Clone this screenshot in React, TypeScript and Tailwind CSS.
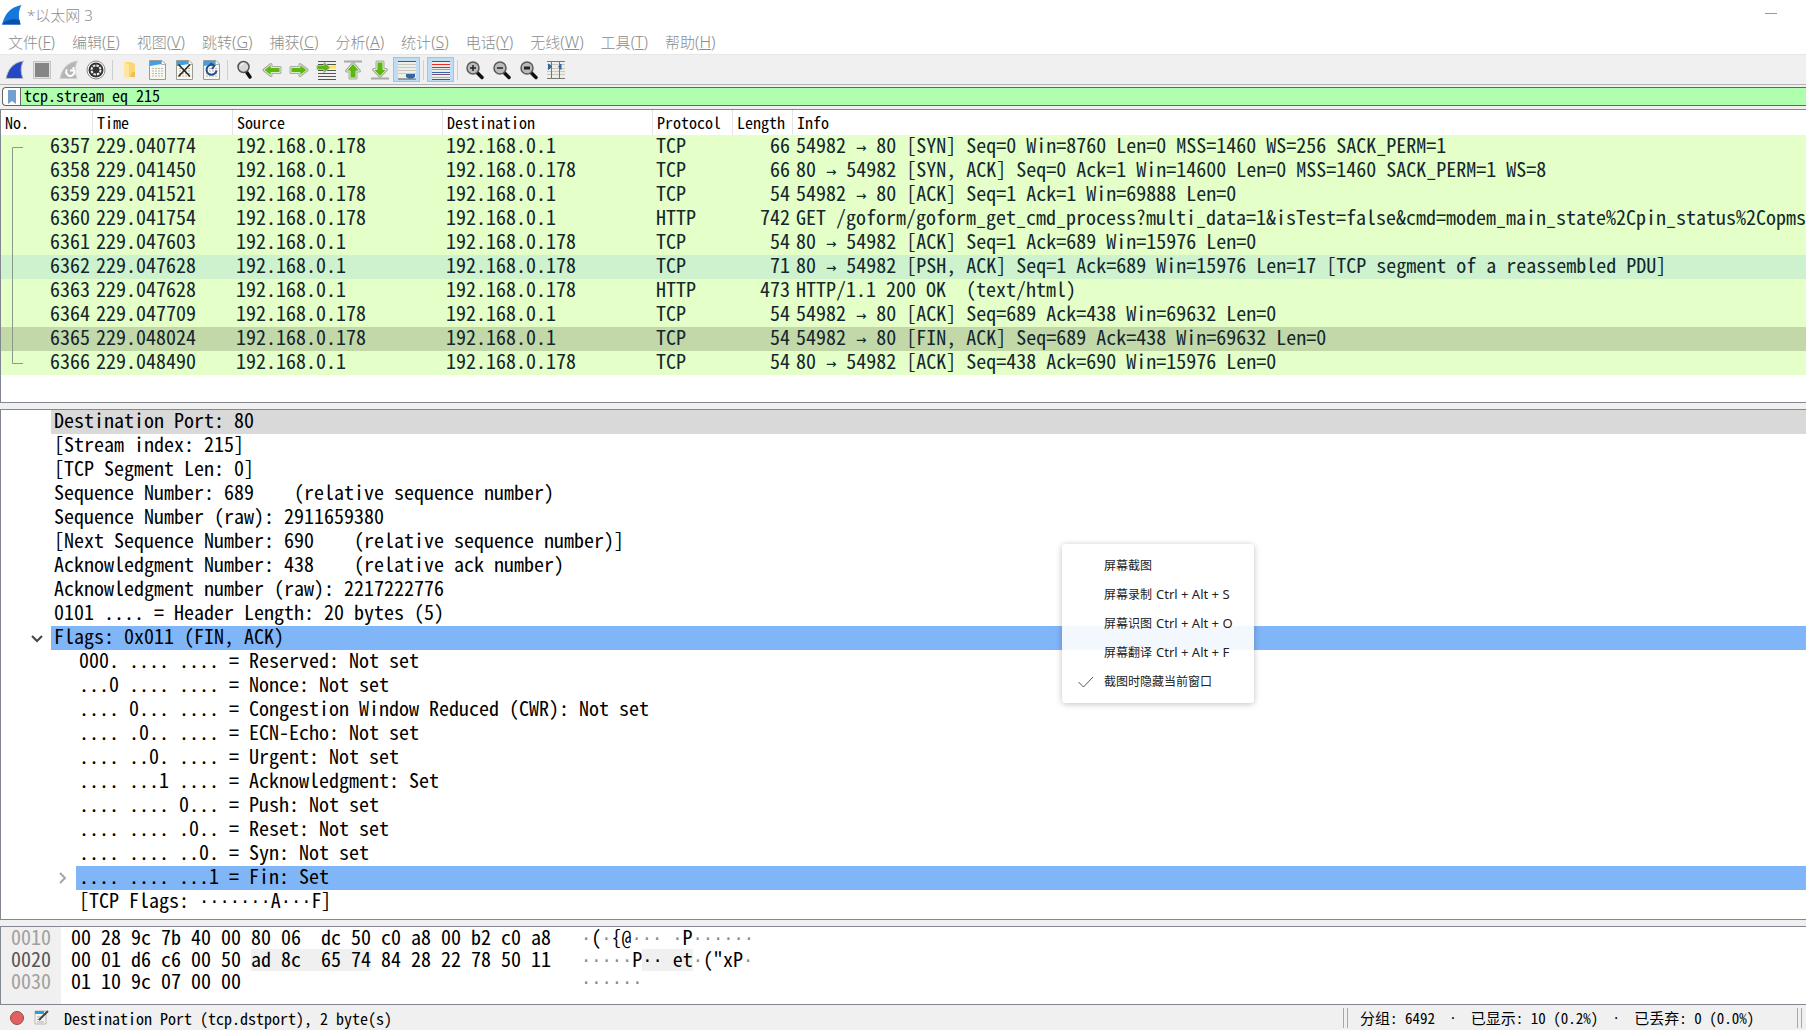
import { ReactNode } from "react";

const MENUS = [
  ["文件", "F"],
  ["编辑", "E"],
  ["视图", "V"],
  ["跳转", "G"],
  ["捕获", "C"],
  ["分析", "A"],
  ["统计", "S"],
  ["电话", "Y"],
  ["无线", "W"],
  ["工具", "T"],
  ["帮助", "H"],
];

const COLUMNS = ["No.", "Time", "Source", "Destination", "Protocol", "Length", "Info"];

const CLIENT = "192.168.0.178";
const SERVER = "192.168.0.1";

const PACKETS = [
  ["6357", "229.040774", CLIENT, SERVER, "TCP", "66", "54982 → 80 [SYN] Seq=0 Win=8760 Len=0 MSS=1460 WS=256 SACK_PERM=1"],
  ["6358", "229.041450", SERVER, CLIENT, "TCP", "66", "80 → 54982 [SYN, ACK] Seq=0 Ack=1 Win=14600 Len=0 MSS=1460 SACK_PERM=1 WS=8"],
  ["6359", "229.041521", CLIENT, SERVER, "TCP", "54", "54982 → 80 [ACK] Seq=1 Ack=1 Win=69888 Len=0"],
  ["6360", "229.041754", CLIENT, SERVER, "HTTP", "742", "GET /goform/goform_get_cmd_process?multi_data=1&isTest=false&cmd=modem_main_state%2Cpin_status%2Copms"],
  ["6361", "229.047603", SERVER, CLIENT, "TCP", "54", "80 → 54982 [ACK] Seq=1 Ack=689 Win=15976 Len=0"],
  ["6362", "229.047628", SERVER, CLIENT, "TCP", "71", "80 → 54982 [PSH, ACK] Seq=1 Ack=689 Win=15976 Len=17 [TCP segment of a reassembled PDU]"],
  ["6363", "229.047628", SERVER, CLIENT, "HTTP", "473", "HTTP/1.1 200 OK  (text/html)"],
  ["6364", "229.047709", CLIENT, SERVER, "TCP", "54", "54982 → 80 [ACK] Seq=689 Ack=438 Win=69632 Len=0"],
  ["6365", "229.048024", CLIENT, SERVER, "TCP", "54", "54982 → 80 [FIN, ACK] Seq=689 Ack=438 Win=69632 Len=0"],
  ["6366", "229.048490", SERVER, CLIENT, "TCP", "54", "80 → 54982 [ACK] Seq=438 Ack=690 Win=15976 Len=0"],
];

const ROW_COLORS: Record<string, string> = {
  "6362": "bg-[#cdf2cd]",
  "6365": "bg-[#c2d8a9]",
};

interface Detail {
  text: string;
  nested?: boolean;
  arrow?: "open" | "closed";
  color?: string;
}

const DETAILS: Detail[] = [
  { text: "Destination Port: 80", color: "bg-[#d9d9d9]" },
  { text: "[Stream index: 215]" },
  { text: "[TCP Segment Len: 0]" },
  { text: "Sequence Number: 689    (relative sequence number)" },
  { text: "Sequence Number (raw): 2911659380" },
  { text: "[Next Sequence Number: 690    (relative sequence number)]" },
  { text: "Acknowledgment Number: 438    (relative ack number)" },
  { text: "Acknowledgment number (raw): 2217222776" },
  { text: "0101 .... = Header Length: 20 bytes (5)" },
  { text: "Flags: 0x011 (FIN, ACK)", arrow: "open", color: "bg-[#80b5f7]" },
  { text: "000. .... .... = Reserved: Not set", nested: true },
  { text: "...0 .... .... = Nonce: Not set", nested: true },
  { text: ".... 0... .... = Congestion Window Reduced (CWR): Not set", nested: true },
  { text: ".... .0.. .... = ECN-Echo: Not set", nested: true },
  { text: ".... ..0. .... = Urgent: Not set", nested: true },
  { text: ".... ...1 .... = Acknowledgment: Set", nested: true },
  { text: ".... .... 0... = Push: Not set", nested: true },
  { text: ".... .... .0.. = Reset: Not set", nested: true },
  { text: ".... .... ..0. = Syn: Not set", nested: true },
  { text: ".... .... ...1 = Fin: Set", nested: true, arrow: "closed", color: "bg-[#80b5f7]" },
  { text: "[TCP Flags: ·······A···F]", nested: true },
];

const POPUP = [
  ["屏幕截图", ""],
  ["屏幕录制", "Ctrl + Alt + S"],
  ["屏幕识图", "Ctrl + Alt + O"],
  ["屏幕翻译", "Ctrl + Alt + F"],
  ["截图时隐藏当前窗口", ""],
];

const MONO = "font-['Noto_Sans_Mono_CJK_SC','Liberation_Mono',monospace]";
const UI = "font-['Noto_Sans','Noto_Sans_CJK_SC',sans-serif]";

// The CJK font draws dots and arrows two cells wide, so they take a Latin font
function Cells({ text }: { text: string }) {
  return (
    <>
      {text.split(/([·→]+)/).map((part, index) =>
        index % 2 ? (
          <span key={index} className="font-['DejaVu_Sans_Mono',monospace] text-[17px]">
            {part}
          </span>
        ) : (
          part
        ),
      )}
    </>
  );
}

function Fin({ body, edge }: { body: string; edge: string }) {
  return (
    <path d="M1 18.500C3 9 8 2.500 18.500 1C15.500 6.500 15.500 12 18 18.500Z" fill={body} stroke={edge} />
  );
}

function Sheet({ children }: { children?: ReactNode }) {
  return (
    <>
      <path d="M2.500 .500H15L18.500 4V19.500H2.500Z" fill="#f8f8ee" stroke="#9a9c92" />
      <path d="M3 1H14.500V4L3 6Z" fill="#3f9fe8" />
      <path d="M14.500 1V4.500H18" fill="#fff" stroke="#a8b4bc" />
      <path d="M5 8.500H16M5 11H16M5 13.500H16M5 16H16" stroke="#b9b9b1" strokeDasharray="2 1" />
      {children}
    </>
  );
}

function Arrow({ d }: { d: string }) {
  return (
    <>
      <path d={d} fill="none" stroke="#a9aca6" strokeWidth="3" strokeLinejoin="round" />
      <path d={d} fill="#5cb711" stroke="#dcecca" />
    </>
  );
}

function Lens({ children }: { children?: ReactNode }) {
  return (
    <>
      <path d="M12 12.500L17 17.500" stroke="#111" strokeWidth="3.500" strokeLinecap="round" />
      <circle cx="8" cy="8" r="6" fill="#bcbcbc" stroke="#5a5a5a" strokeWidth="1.500" />
      {children}
    </>
  );
}

const TOOLS: { name: string; icon: ReactNode; on?: boolean; split?: boolean }[] = [
  { name: "开始", icon: <Fin body="#2548c4" edge="#b9bcc4" /> },
  {
    name: "停止",
    icon: (
      <>
        <path d="M1.500 1.500H18.500V18.500H1.500Z" fill="#e2e2e2" stroke="#c4c4c4" />
        <path d="M3 3H17V17H3Z" fill="#858585" />
      </>
    ),
  },
  {
    name: "重新开始",
    icon: (
      <>
        <Fin body="#b5b5b5" edge="#cfcfcf" />
        <path d="M14.500 9.500A4 4 0 1 1 8 9.500M14.500 7V10.500H11" fill="none" stroke="#fff" strokeWidth="2" />
      </>
    ),
  },
  {
    name: "捕获选项",
    split: true,
    icon: (
      <>
        <circle cx="10" cy="10" r="9" fill="#fff" stroke="#888" />
        <circle cx="10" cy="10" r="7.500" fill="#333" />
        <circle cx="10" cy="10" r="4.500" fill="none" stroke="#eee" strokeWidth="2" strokeDasharray="2.500 1" />
        <circle cx="10" cy="10" r="2.500" fill="#333" />
      </>
    ),
  },
  {
    name: "打开",
    icon: (
      <>
        <path d="M4 2H11L15 4V17H4Z" fill="#f8d775" />
        <path d="M4 2L9 5V19L4 17Z" fill="#ffe7a0" />
        <path d="M12 12H15V17H10Z" fill="#f0c050" />
      </>
    ),
  },
  { name: "保存", icon: <Sheet /> },
  {
    name: "关闭",
    icon: (
      <Sheet>
        <path d="M4.500 4.500L16 16.500M16 4.500L4.500 16.500" stroke="#222" strokeWidth="1.500" />
      </Sheet>
    ),
  },
  {
    name: "重新加载",
    split: true,
    icon: (
      <Sheet>
        <path d="M13 5.500A5 5 0 1 0 15.500 10.500M9 3.500L13.500 5.500L11 9" fill="none" stroke="#234f91" strokeWidth="2" />
      </Sheet>
    ),
  },
  {
    name: "查找",
    icon: (
      <>
        <path d="M11.500 12L15 17" stroke="#111" strokeWidth="3.500" strokeLinecap="round" />
        <circle cx="8.500" cy="7" r="5.500" fill="#d7d7d7" stroke="#555" strokeWidth="1.500" />
        <path d="M5.500 6.500A3.500 3.500 0 0 1 9 3.500" stroke="#fff" fill="none" />
      </>
    ),
  },
  { name: "后退", icon: <Arrow d="M18 7.500H9V4.500L2 10L9 15.500V12.500H18Z" /> },
  { name: "前进", icon: <Arrow d="M2 7.500H11V4.500L18 10L11 15.500V12.500H2Z" /> },
  {
    name: "转到分组",
    icon: (
      <>
        <path d="M2 1.500H20M2 4.500H20M2 10.500H20M2 13.500H20M2 16.500H20M2 19.500H20" stroke="#555" />
        <path d="M14 7H20" stroke="#ffe640" strokeWidth="3" />
        <path d="M1 5.500H8V2L14 7.500L8 13V9.500H1Z" fill="#5cb711" stroke="#b8bdb3" />
      </>
    ),
  },
  {
    name: "首个分组",
    icon: (
      <>
        <path d="M1 1.500H19" stroke="#aaa" strokeWidth="2" />
        <Arrow d="M10 3.500L16.500 11H13V18H7V11H3.500Z" />
      </>
    ),
  },
  {
    name: "最新分组",
    icon: (
      <>
        <path d="M1 18.500H19" stroke="#aaa" strokeWidth="2" />
        <Arrow d="M10 16.500L16.500 9.500H13V2H7V9.500H3.500Z" />
      </>
    ),
  },
  {
    name: "自动滚动",
    on: true,
    split: true,
    icon: (
      <>
        <path d="M1 1H19V19H1Z" fill="#eeeee8" />
        <path d="M1 4.500H19M1 7.500H19M1 10.500H19M1 13.500H19" stroke="#c8c8c0" />
        <path d="M1 1.500H19M1 19H19" stroke="#555" />
        <path d="M9 14H18V17L15.500 18.500H11.500L9 17Z" fill="#3465a4" />
      </>
    ),
  },
  {
    name: "着色",
    on: true,
    split: true,
    icon: (
      <>
        <path d="M1 1H19V19H1Z" fill="#eeeee8" />
        <path d="M1 1.500H19M1 19.500H19" stroke="#555" />
        <path d="M1 4.500H19" stroke="#ef2929" />
        <path d="M1 7.500H19" stroke="#3465a4" />
        <path d="M1 9.500H19" stroke="#73d216" />
        <path d="M1 12.500H19" stroke="#3465a4" />
        <path d="M1 14.500H19" stroke="#75507b" />
        <path d="M1 17.500H19" stroke="#edb200" />
      </>
    ),
  },
  {
    name: "放大",
    icon: (
      <Lens>
        <path d="M5 8H11M8 5V11" stroke="#222" strokeWidth="1.500" />
      </Lens>
    ),
  },
  {
    name: "缩小",
    icon: (
      <Lens>
        <path d="M5 8H11" stroke="#222" strokeWidth="1.500" />
      </Lens>
    ),
  },
  {
    name: "正常大小",
    icon: (
      <Lens>
        <path d="M5 8H11" stroke="#222" strokeWidth="3" />
      </Lens>
    ),
  },
  {
    name: "调整列宽",
    icon: (
      <>
        <path d="M1 3H19V18H1Z" fill="#eeeee8" />
        <path d="M1 4.500H19M1 8.500H19M1 11.500H19M1 14.500H19" stroke="#c8c8c0" />
        <path d="M1 1.500H19M1 18.500H19M5.500 1V19M13.500 1V19" stroke="#777" />
        <path d="M2.500 4L5.500 6.500L2.500 9.500ZM15 4L12.500 6.500L15 9.500Z" fill="#3465a4" stroke="#3465a4" />
      </>
    ),
  },
];

function TreeMark({ index }: { index: number }) {
  const last = PACKETS.length - 1;
  const d = index === 0 ? "M23 12.500H12.500V24" : index === last ? "M12.500 0V12.500H23" : "M12.500 0V24";
  return (
    <svg className="h-6 w-6 shrink-0" viewBox="1 0 24 24" fill="none" stroke="#8b9a86">
      <path d={d} />
    </svg>
  );
}

function PacketTable() {
  return (
    <section className="h-[294px] shrink-0 overflow-hidden border border-r-0 border-[#828790] bg-white">
      <table className="w-full table-fixed border-separate border-spacing-0">
        <colgroup>
          <col className="w-[92px]" />
          <col className="w-[140px]" />
          <col className="w-[210px]" />
          <col className="w-[210px]" />
          <col className="w-20" />
          <col className="w-[60px]" />
          <col />
        </colgroup>
        <thead>
          <tr className="text-left text-[16px] leading-6">
            {COLUMNS.map((name) => (
              <th key={name} className="h-[25px] border-r border-[#e5e5e5] p-0 pl-1 align-top font-normal last:border-r-0">
                {name}
              </th>
            ))}
          </tr>
        </thead>
        <tbody className="text-[20px] leading-5 whitespace-pre text-[#12272e]">
          {PACKETS.map(([no, time, source, destination, protocol, length, info], index) => (
            <tr key={no} className={ROW_COLORS[no] ?? "bg-[#e4ffc7]"}>
              <td className="h-6 p-0 align-top">
                <div className="flex h-6 justify-between pr-[3px]">
                  <TreeMark index={index} />
                  {no}
                </div>
              </td>
              <td className="p-0 pl-[3px] align-top">{time}</td>
              <td className="p-0 pl-[3px] align-top">{source}</td>
              <td className="p-0 pl-[3px] align-top">{destination}</td>
              <td className="p-0 pl-[3px] align-top">{protocol}</td>
              <td className="p-0 pr-[3px] text-right align-top">{length}</td>
              <td className="p-0 pl-[3px] align-top">
                <Cells text={info} />
              </td>
            </tr>
          ))}
        </tbody>
      </table>
    </section>
  );
}

function DetailTree() {
  return (
    <section className="min-h-0 flex-1 overflow-hidden border border-r-0 border-[#828790] bg-white text-[20px] leading-5 whitespace-pre">
      {DETAILS.map(({ text, nested, arrow, color }) => (
        <div key={text} className="flex h-6">
          <div className={`flex shrink-0 items-center justify-end ${nested ? "w-[75px] pr-2" : "w-[50px] pr-2"}`}>
            {arrow && (
              <svg width="12" height="12" viewBox="0 0 12 12" fill="none" strokeWidth="2">
                {arrow === "open" ? <path d="M1 4L6 9L11 4" stroke="#444" /> : <path d="M4 1L9 6L4 11" stroke="#a6a6a6" />}
              </svg>
            )}
          </div>
          <div className={`flex-1 pl-[3px] ${color ?? ""}`}>
            <Cells text={text} />
          </div>
        </div>
      ))}
    </section>
  );
}

function Dots({ children }: { children: string }) {
  return (
    <span className="text-[#8c8c8c]">
      <Cells text={children} />
    </span>
  );
}

function HexView() {
  return (
    <section className="flex h-[79px] shrink-0 overflow-hidden border border-r-0 border-[#828790] bg-white text-[20px] leading-5 whitespace-pre">
      <div className="grid w-[60px] auto-rows-[22px] bg-[#f0f0f0] pl-2.5 text-[#a0a0a0]">
        <div>0010</div>
        <div className="text-[#555]">0020</div>
        <div>0030</div>
      </div>
      <div className="grid w-[520px] auto-rows-[22px] pl-2.5">
        <div>00 28 9c 7b 40 00 80 06  dc 50 c0 a8 00 b2 c0 a8</div>
        <div className="flex">
          <span>00 01 d6 c6 00 50 </span>
          <mark className="bg-[#f0f0f0] text-black">ad 8c  65 74</mark>
          <span> 84 28 22 78 50 11</span>
        </div>
        <div>01 10 9c 07 00 00</div>
      </div>
      <div className="grid auto-rows-[22px]">
        <div>
          <Dots>·</Dots>(<Dots>·</Dots>
          {"{@"}
          <Dots>··· ·</Dots>P<Dots>······</Dots>
        </div>
        <div className="flex">
          <Dots>·····</Dots>
          <span>P</span>
          <mark className="bg-[#f0f0f0] text-black">
            <Cells text="·· et" />
          </mark>
          <Dots>·</Dots>
          <span>("xP</span>
          <Dots>·</Dots>
        </div>
        <div>
          <Dots>······</Dots>
        </div>
      </div>
    </section>
  );
}

function StatusDot() {
  return <span className="px-3.5 font-['DejaVu_Sans_Mono',monospace] text-[13px]">·</span>;
}

function StatusBar() {
  return (
    <footer className="flex h-[25px] shrink-0 items-center pl-2 text-[16px] leading-6 whitespace-pre">
      <button aria-label="专家信息">
        <svg width="18" height="18" viewBox="0 0 18 18">
          <circle cx="9" cy="9" r="6.500" fill="#e0615f" stroke="#994746" />
        </svg>
      </button>
      <button aria-label="捕获文件注释" className="ml-2">
        <svg width="15" height="15" viewBox="0 0 15 15">
          <path d="M1 1H12V14H1Z" fill="#f6f6ee" stroke="#b8b8b0" />
          <path d="M1 1H10V4H1Z" fill="#329be0" />
          <path d="M3 7H9M3 9.500H7M3 12H10" stroke="#aaa" />
          <path d="M5 10L14 1" stroke="#38464a" strokeWidth="2" />
        </svg>
      </button>
      <span className="ml-[15px]">Destination Port (tcp.dstport), 2 byte(s)</span>
      <div className="ml-auto flex h-5 w-[463px] items-center border-l border-[#a8a8a8] pr-1">
        <div className="ml-[3px] flex h-5 flex-1 items-center border-l border-[#a8a8a8] pl-3 text-[15px]">
          分组: 6492
          <StatusDot />
          已显示: 10 (0.2%)
          <StatusDot />
          已丢弃: 0 (0.0%)
        </div>
        <div className="h-5 w-[5px] border-x border-[#a8a8a8]" />
      </div>
    </footer>
  );
}

function ScreenshotMenu() {
  return (
    <div
      role="menu"
      className={`absolute top-[544px] left-[1062px] w-48 rounded bg-white/90 py-[7px] whitespace-pre text-[#222] shadow-[0_1px_6px_rgba(0,0,0,0.25)] ${UI}`}
    >
      {POPUP.map(([label, keys], index) => (
        <button key={label} role="menuitem" className="flex h-[29px] w-full items-center text-left text-[12px]">
          <span className="w-[42px] pl-4">
            {index === POPUP.length - 1 && (
              <svg width="16" height="12" viewBox="0 0 16 12" fill="none" stroke="#555">
                <path d="M.500 6L5.500 11L15 1" />
              </svg>
            )}
          </span>
          {label}
          {keys && <kbd className={`ml-1 text-[13px] ${UI}`}>{keys}</kbd>}
        </button>
      ))}
    </div>
  );
}

export default function App() {
  return (
    <div className={`relative flex h-screen flex-col overflow-hidden bg-[#f0f0f0] text-black ${MONO}`}>
      <header className={`bg-white font-light text-[#8c8c8c] ${UI}`}>
        <div className="flex h-[30px] items-center gap-[5px] pl-0.5">
          <svg width="20" height="20" viewBox="0 0 20 20">
            <path d="M0 19.500C3 8 9 2 19.500 0C16 6 16.500 13 18.500 19.500Z" fill="#1677dc" />
            <path d="M0 19.500C3 15 12 13 17.500 15L18.500 19.500Z" fill="#0b4fae" />
          </svg>
          <h1 className="text-[15px]">*以太网 3</h1>
          <button aria-label="最小化" className="mr-7 ml-auto">
            <svg width="14" height="14" viewBox="0 0 14 14" stroke="#999">
              <path d="M1 5.500H13" />
            </svg>
          </button>
        </div>
        <nav className="flex h-6 items-center gap-[17px] pl-2 text-[15px]">
          {MENUS.map(([label, key]) => (
            <button key={key}>
              {label}
              <span className="text-[16px]">
                (<span className="underline">{key}</span>)
              </span>
            </button>
          ))}
        </nav>
      </header>

      <div className="flex h-[31px] shrink-0 items-center border-t border-b border-t-[#e6e6e6] border-b-[#b4b4b4] pl-px">
        {TOOLS.map(({ name, icon, on, split }) => (
          <div key={name} className="flex items-center">
            <button
              aria-label={name}
              className={`flex h-[25px] w-[27px] items-center justify-center ${on ? "border border-[#90c8f6] bg-[#c0dcf3]" : ""}`}
            >
              <svg width="20" height="20" viewBox="0 0 20 20">
                {icon}
              </svg>
            </button>
            {split && <div className="mx-[3px] h-5 w-px bg-[#cfcfcf]" />}
          </div>
        ))}
      </div>

      <div className="mt-0.5 ml-0.5 flex h-[19px] shrink-0 rounded-l border border-r-0 border-[#666] bg-white">
        <button aria-label="书签" className="flex w-[17px] items-center justify-center">
          <svg width="10" height="14" viewBox="0 0 10 14">
            <path d="M1 0H9V14L5 11L1 14Z" fill="#729fcf" />
          </svg>
        </button>
        <input
          aria-label="显示过滤器"
          defaultValue="tcp.stream eq 215"
          className="h-[17px] flex-1 border-l border-[#666] bg-[#afffaf] pb-[3px] pl-[3px] text-[16px] leading-[14px] outline-none"
        />
      </div>

      <main className="mt-[3px] flex min-h-0 flex-1 flex-col gap-1.5">
        <PacketTable />
        <DetailTree />
        <HexView />
      </main>
      <StatusBar />
      <ScreenshotMenu />
    </div>
  );
}
